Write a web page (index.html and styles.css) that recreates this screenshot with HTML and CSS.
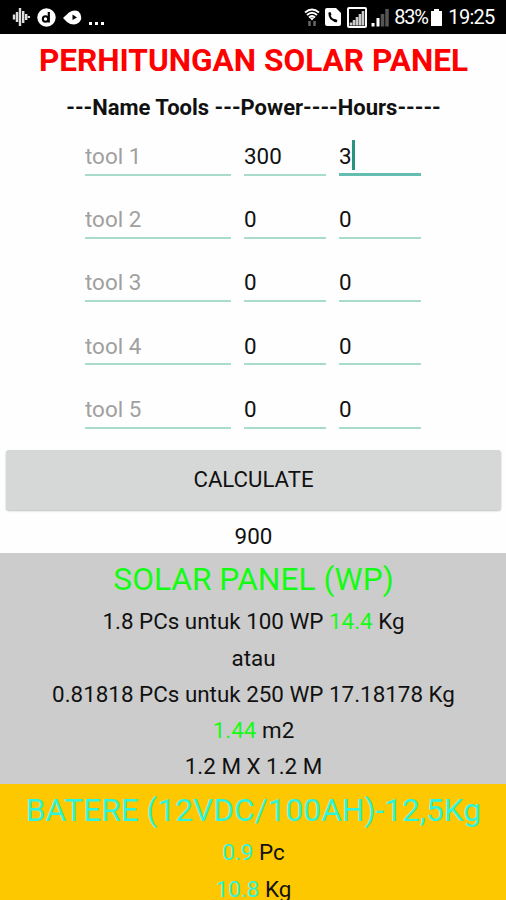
FILE: index.html
```html
<!DOCTYPE html>
<html lang="id">
<head>
  <meta charset="UTF-8">
  <meta name="viewport" content="width=device-width, initial-scale=1.0">
  <title>Perhitungan Solar Panel</title>
  <link rel="stylesheet" href="styles.css">
</head>
<body>
  <!-- Status bar -->
  <div class="status-bar">
    <div class="status-left">
      <svg width="18" height="20" viewBox="0 0 18 20" stroke="#ddd" stroke-width="2.4">
        <path d="M2 7.500v5M5 5v10M8 1v18M11.200 4v12M14.200 7v6M17 9v2"/>
      </svg>
      <svg width="19" height="19" viewBox="0 0 19 19">
        <circle cx="9.500" cy="9.500" r="9.200" fill="#fff"/>
        <circle cx="8.500" cy="11" r="2.700" fill="none" stroke="#000" stroke-width="2"/>
        <path d="M11.800 4v10.500" stroke="#000" stroke-width="2.200"/>
      </svg>
      <svg width="19" height="15" viewBox="0 0 19 15">
        <path d="M0 8L6 2.500Q11-1 15.500 1.500Q19 4.500 18 9.500Q16 14 11 14.500Q7 14.500 4 12Z" fill="#fff"/>
        <path d="M9.500 4.500L14 7.500L9.500 10Z" fill="#000"/>
      </svg>
      <svg width="15" height="20" viewBox="0 0 15 20" fill="#fff">
        <path d="M0 15h3v3H0zM6 15h3v3H6zM12 15h3v3h-3z"/>
      </svg>
    </div>
    <div class="status-right">
      <svg width="16" height="19" viewBox="0 0 16 19" fill="none" stroke="#fff" stroke-width="1.800">
        <path d="M1 4.500Q8-1.500 15 4.500M3 7Q8 2.500 13 7M5 9.500Q8 6.500 11 9.500"/>
        <path d="M5.500 9.500h5L8 12.500z" fill="#fff" stroke="none"/>
        <path d="M5.500 13v5M10.500 13v5" stroke="#666" stroke-width="2.500"/>
      </svg>
      <svg class="icon-call" width="16" height="18" viewBox="0 0 16 18">
        <path d="M2 0h9l5 5v11q0 2-2 2H2q-2 0-2-2V2q0-2 2-2z" fill="#fff"/>
        <path d="M4.500 5Q4 11.500 11.500 13" fill="none" stroke="#000" stroke-width="2"/>
        <path d="M3.500 4.500l2-.5 1 3-2 1zM9 11l3.500 1-1 2.500-3-1z" fill="#000"/>
      </svg>
      <svg class="icon-signal-box" width="20" height="21" viewBox="0 0 20 21">
        <rect x="1" y="1" width="18" height="19" rx="1" fill="none" stroke="#fff" stroke-width="2"/>
        <path d="M4 15.500v3M7 13v5.500M10 10v8.500M13 7v11.500M16 4v14.500" stroke="#ccc" stroke-width="2.600"/>
      </svg>
      <svg class="icon-signal" width="18" height="19" viewBox="0 0 18 19">
        <path d="M2 15v3.500M7 10v8.500" stroke="#fff" stroke-width="3"/>
        <path d="M11.500 6v12.500M16 1v17.500" stroke="#555" stroke-width="3.500"/>
      </svg>
      <span class="battery-text">83%</span>
      <svg class="icon-battery" width="11" height="17" viewBox="0 0 11 17" fill="#fff">
        <path d="M3 0h5v2h3v15H0V2h3z"/>
      </svg>
      <span class="clock">19:25</span>
    </div>
  </div>

  <h1>PERHITUNGAN SOLAR PANEL</h1>
  <div class="columns-title">---Name Tools ---Power----Hours-----</div>

  <!-- Tools form -->
  <form class="tools-form">
    <div class="tool-row">
      <input type="text" class="name" placeholder="tool 1">
      <input type="text" class="power" value="300">
      <div class="hours focused"><span>3</span></div>
    </div>
    <div class="tool-row">
      <input type="text" class="name" placeholder="tool 2">
      <input type="text" class="power" value="0">
      <input type="text" class="hours" value="0">
    </div>
    <div class="tool-row">
      <input type="text" class="name" placeholder="tool 3">
      <input type="text" class="power" value="0">
      <input type="text" class="hours" value="0">
    </div>
    <div class="tool-row">
      <input type="text" class="name" placeholder="tool 4">
      <input type="text" class="power" value="0">
      <input type="text" class="hours" value="0">
    </div>
    <div class="tool-row">
      <input type="text" class="name" placeholder="tool 5">
      <input type="text" class="power" value="0">
      <input type="text" class="hours" value="0">
    </div>
    <button type="button">CALCULATE</button>
  </form>
  <div class="total">900</div>

  <!-- Solar panel result -->
  <div class="result solar">
    <h2>SOLAR PANEL (WP)</h2>
    <p>1.8 PCs untuk 100 WP <span>14.4</span> Kg</p>
    <p>atau</p>
    <p>0.81818 PCs untuk 250 WP 17.18178 Kg</p>
    <p><span>1.44</span> m2</p>
    <p>1.2 M X 1.2 M</p>
  </div>

  <!-- Battery result -->
  <div class="result battery">
    <h2>BATERE (12VDC/100AH)-12,5Kg</h2>
    <p><span>0.9</span> Pc</p>
    <p><span>10.8</span> Kg</p>
  </div>
</body>
</html>
```

FILE: styles.css
```css
* {
  box-sizing: border-box;
}

body {
  margin: 0;
  height: 900px;
  overflow: hidden;
  font-family: Roboto, sans-serif;
  font-size: 22.4px;
  color: #111;
  background-color: #fefefe;
  text-align: center;
}

/* Status bar */
.status-bar {
  display: flex;
  justify-content: space-between;
  height: 34px;
  padding: 0 11px 0 12px;
  background-color: #000;
  color: #fff;
}

.status-left,
.status-right {
  display: flex;
  align-items: center;
}

.status-left {
  gap: 7px;
}

.icon-call {
  margin-left: 5px;
}

.icon-signal-box {
  margin-left: 6px;
}

.icon-signal {
  margin-left: 4px;
}

.battery-text {
  margin-left: 5px;
  width: 34px;
  font-size: 20px;
  letter-spacing: -1.2px;
}

.icon-battery {
  margin-left: 3px;
}

.clock {
  margin-left: 6px;
  width: 47px;
  font-size: 20px;
  letter-spacing: -0.7px;
}

h1 {
  margin: 5px 0 0;
  padding-left: 1px;
  font-size: 31.6px;
  line-height: 43px;
  font-weight: bold;
  color: #ff0000;
}

.columns-title {
  height: 43px;
  padding: 8px 0 0 1px;
  font-size: 22px;
  line-height: 36px;
  font-weight: bold;
}

/* Tools form */
.tool-row {
  display: flex;
  justify-content: center;
  gap: 13px;
  height: 63.25px;
  padding-top: 12px;
}

.name,
.power,
.hours {
  height: 38.5px;
  padding: 1px 0 0;
  border: none;
  border-bottom: 2px solid #a9dccd;
  border-radius: 0;
  outline: none;
  background: none;
  font: inherit;
  color: #111;
  text-align: left;
}

.name {
  width: 146px;
}

.power {
  width: 82px;
}

.hours {
  width: 82px;
}

.name::placeholder {
  color: #a0a0a0;
}

.focused {
  height: 39px;
  padding: 0;
  border-bottom: 3px solid #63bdb0;
}

/* Text cursor after the typed value */
.focused span {
  display: inline-block;
  height: 30px;
  margin-top: 3px;
  border-right: 3px solid #2b9480;
  line-height: 33px;
}

button {
  display: block;
  width: 495px;
  height: 60px;
  margin: 8.75px auto 0 6px;
  padding: 0 0 2px;
  border: none;
  border-radius: 3px;
  background-color: #d6d8d7;
  box-shadow: 0 1px 2px rgba(0, 0, 0, 0.25);
  font: inherit;
  font-size: 22.2px;
  color: #111;
}

.total {
  height: 43px;
  padding: 8px 0 0 1px;
  line-height: 36px;
}

/* Results */
.result {
  padding-left: 1px;
}

.result h2 {
  margin: 0;
  height: 50.3px;
  font-size: 31.7px;
  line-height: 53px;
  font-weight: normal;
}

.result p {
  margin: 0;
  line-height: 36.3px;
}

.solar {
  height: 231px;
  background-color: #ccc;
}

.solar h2,
.solar span {
  color: #14fb14;
}

.battery {
  height: 116px;
  background-color: #fdc800;
}

.battery h2,
.battery span {
  color: #2df5dc;
}
```
